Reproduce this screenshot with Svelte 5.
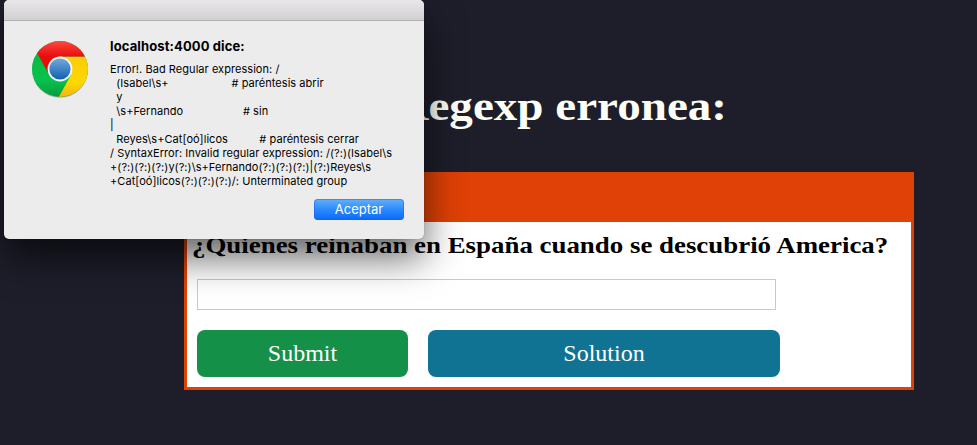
<script>
  const message = [
    'Error!. Bad Regular expression: /',
    '  (Isabel\\s+                    # paréntesis abrir',
    '  y',
    '  \\s+Fernando                   # sin',
    '|',
    '  Reyes\\s+Cat[oó]licos          # paréntesis cerrar',
    '/ SyntaxError: Invalid regular expression: /(?:)(Isabel\\s',
    '+(?:)(?:)(?:)y(?:)\\s+Fernando(?:)(?:)(?:)|(?:)Reyes\\s',
    '+Cat[oó]licos(?:)(?:)(?:)/: Unterminated group'
  ];
</script>

<main>
  <h1>Regexp erronea:</h1>
  <section class="card">
    <header></header>
    <div class="body">
      <h2>¿Quienes reinaban en España cuando se descubrió America?</h2>
      <input type="text" aria-label="Respuesta" />
      <div class="actions">
        <button class="submit">Submit</button>
        <button class="solution">Solution</button>
      </div>
    </div>
  </section>
</main>

<div class="dialog" role="alertdialog" aria-labelledby="dialog-title">
  <div class="titlebar"></div>
  <div class="content">
    <svg class="logo" viewBox="0 0 60 60" width="60" height="60">
      <defs>
        <linearGradient id="red" x1="0" y1="0" x2="0" y2="1">
          <stop offset="0" stop-color="#ff5147" />
          <stop offset=".5" stop-color="#e90d0d" />
          <stop offset="1" stop-color="#ea0808" />
        </linearGradient>
        <linearGradient id="green" x1="0" y1="0" x2="0" y2="1">
          <stop offset="0" stop-color="#02b640" />
          <stop offset=".7" stop-color="#08c24d" />
          <stop offset="1" stop-color="#079a3e" />
        </linearGradient>
        <linearGradient id="yellow" x1="0" y1="0" x2="0" y2="1">
          <stop offset="0" stop-color="#f9cb0a" />
          <stop offset=".6" stop-color="#ffd900" />
          <stop offset="1" stop-color="#f0b210" />
        </linearGradient>
        <linearGradient id="blue" x1="0" y1="0" x2="0" y2="1">
          <stop offset="0" stop-color="#76a9dc" />
          <stop offset="1" stop-color="#0e60b0" />
        </linearGradient>
        <clipPath id="disc"><circle cx="30" cy="30" r="28" /></clipPath>
      </defs>
      <circle cx="30" cy="30.8" r="28" fill="#000" opacity=".25" />
      <g clip-path="url(#disc)">
        <rect x="0" y="2" width="60" height="56" fill="url(#green)" />
        <path d="M0 0H60V17.7H30L18.5 34.5L7.3 14.5Z" fill="url(#red)" />
        <path d="M28.5 58.5L41 36L30 30V17.7H60V60H28Z" fill="url(#yellow)" />
      </g>
      <circle cx="30" cy="30" r="12.4" fill="#f3f5f7" />
      <circle cx="30" cy="30" r="10.6" fill="url(#blue)" />
    </svg>
    <div class="copy">
      <strong id="dialog-title">localhost:4000 dice:</strong>
      <div class="message">
        {#each message as line}<div>{line}</div>{/each}
      </div>
      <button class="accept">Aceptar</button>
    </div>
  </div>
</div>

<style>
  :global(body) {
    background: #1d1e2a;
    overflow: hidden;
  }
  main {
    box-sizing: border-box;
    width: 977px;
    height: 445px;
    padding: 80px 63px 0 184px;
    font-family: Georgia, 'Liberation Serif', serif;
  }
  h1 {
    margin: 0 187px 0 0;
    height: 92px;
    font-size: 43px;
    line-height: 52px;
    text-align: right;
    color: #fdfef6;
    white-space: nowrap;
    transform: scaleX(1.095);
    transform-origin: right top;
  }
  .card {
    box-sizing: border-box;
    height: 218px;
    border: 3px solid #df4106;
    background: #fff;
  }
  header {
    height: 47px;
    background: #df4106;
  }
  .body {
    padding: 0 10px;
  }
  h2 {
    margin: 9px 0 19px -5px;
    font-size: 24px;
    line-height: 29px;
    white-space: nowrap;
    color: #000;
    transform: scaleX(1.12);
    transform-origin: left top;
  }
  input {
    display: block;
    box-sizing: border-box;
    width: 579px;
    height: 31px;
    margin: 0 0 20px;
    border: 1px solid #c8c9ca;
    background: #fff;
    outline: none;
  }
  .actions {
    display: flex;
    gap: 20px;
  }
  button {
    border: 0;
    padding: 0;
    color: #fff;
  }
  .actions button {
    height: 47px;
    border-radius: 8px;
    font: 24px/47px Georgia, 'Liberation Serif', serif;
  }
  .submit {
    width: 211px;
    background: #159048;
  }
  .solution {
    width: 352px;
    background: #107394;
  }
  .dialog {
    position: absolute;
    left: 4px;
    top: 0;
    width: 420px;
    height: 239px;
    border-radius: 5px;
    background: #ececec;
    box-shadow: 0 0 1px rgba(0, 0, 0, 0.45), 0 18px 38px rgba(0, 0, 0, 0.62);
    font-family: Inter, sans-serif;
    font-feature-settings: 'calt' 0;
    color: #000;
  }
  .titlebar {
    box-sizing: border-box;
    height: 21px;
    border-bottom: 1px solid #b3b1b3;
    border-radius: 5px 5px 0 0;
    background: linear-gradient(#e8e6e8, #d2d0d2);
  }
  .content {
    display: flex;
    padding: 18px 20px 0 26px;
  }
  .logo {
    flex: none;
    margin-right: 20px;
  }
  .copy {
    flex: 1;
    display: flex;
    flex-direction: column;
  }
  strong {
    font-size: 13px;
    line-height: 15px;
    letter-spacing: 0.12px;
  }
  .message {
    margin-top: 8px;
    font-size: 11px;
    line-height: 14px;
    letter-spacing: 0.05px;
    white-space: pre;
  }
  .message div {
    height: 14px;
  }
  .accept {
    align-self: flex-end;
    width: 90px;
    height: 21px;
    margin-top: 11px;
    border-radius: 4px;
    background: linear-gradient(#66b0fb, #2a8bfb 50%, #0b68fd);
    box-shadow: inset 0 0 0 1px rgba(25, 90, 240, 0.45);
    font: 13px/21px Inter, sans-serif;
  }
</style>
